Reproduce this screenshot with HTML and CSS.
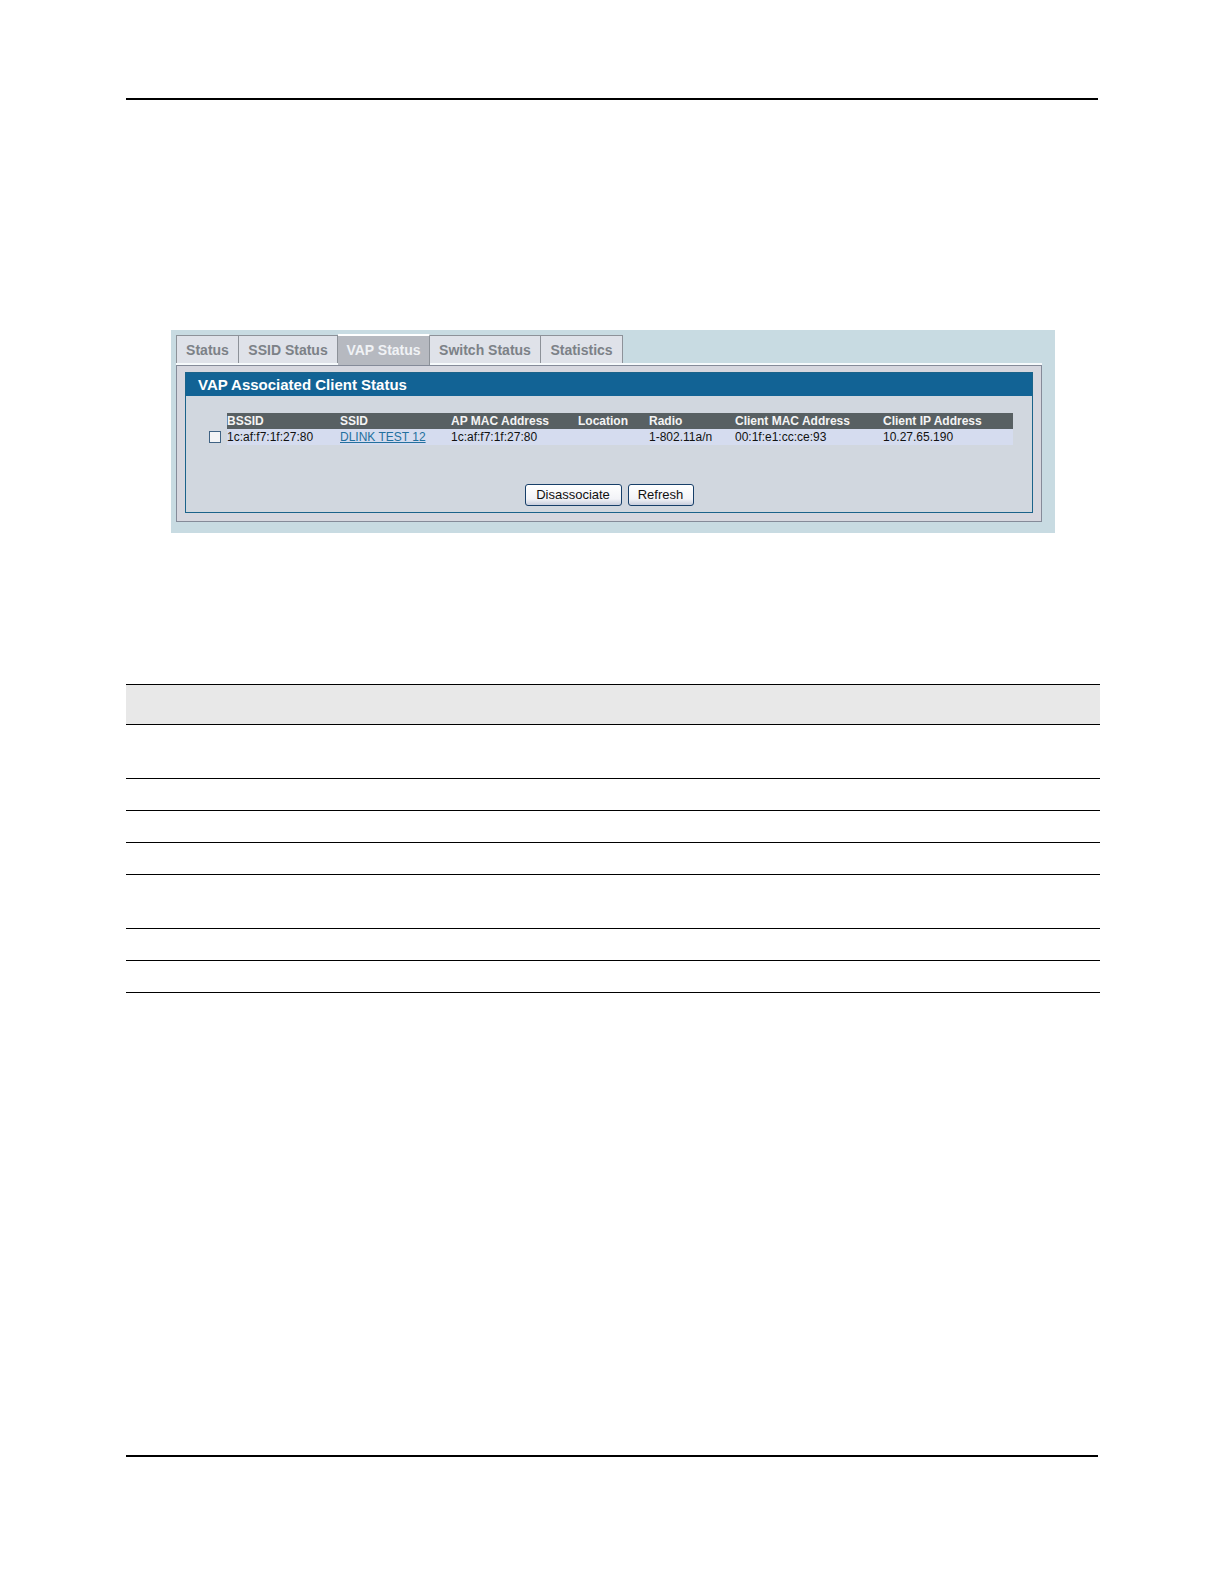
FILE: index.html
```html
<!DOCTYPE html>
<html lang="en">
<head>
<meta charset="utf-8">
<title>VAP Associated Client Status</title>
<link rel="stylesheet" href="styles.css">
</head>
<body>
<div class="page">
  <header class="page-rule"></header>
  <main>
    <section class="screen">
      <nav class="tabs">
        <a class="tab tab-status" href="#">Status</a>
        <a class="tab tab-ssid" href="#">SSID Status</a>
        <a class="tab tab-vap active" href="#">VAP Status</a>
        <a class="tab tab-switch" href="#">Switch Status</a>
        <a class="tab tab-statistics" href="#">Statistics</a>
      </nav>
      <div class="frame">
        <form class="panel">
          <h1 class="panel-title">VAP Associated Client Status</h1>
          <table class="clients">
            <colgroup>
              <col class="col-check"><col class="col-bssid"><col class="col-ssid"><col class="col-ap"><col class="col-location"><col class="col-radio"><col class="col-mac"><col>
            </colgroup>
            <thead>
              <tr><td></td><th scope="col">BSSID</th><th scope="col">SSID</th><th scope="col">AP MAC Address</th><th scope="col">Location</th><th scope="col">Radio</th><th scope="col">Client MAC Address</th><th scope="col">Client IP Address</th></tr>
            </thead>
            <tbody>
              <tr><td><input class="check" type="checkbox" aria-labelledby="bssid-1"></td><td id="bssid-1">1c:af:f7:1f:27:80</td><td><a class="ssid" href="#">DLINK TEST 12</a></td><td>1c:af:f7:1f:27:80</td><td></td><td>1-802.11a/n</td><td>00:1f:e1:cc:ce:93</td><td>10.27.65.190</td></tr>
            </tbody>
          </table>
          <div class="actions">
            <button class="btn btn-wide" type="button">Disassociate</button>
            <button class="btn" type="button">Refresh</button>
          </div>
        </form>
      </div>
    </section>
    <table class="fields">
      <thead><tr><th></th><th></th></tr></thead>
      <tbody>
        <tr class="tall"><td></td><td></td></tr>
        <tr><td></td><td></td></tr>
        <tr><td></td><td></td></tr>
        <tr><td></td><td></td></tr>
        <tr class="tall"><td></td><td></td></tr>
        <tr><td></td><td></td></tr>
        <tr><td></td><td></td></tr>
      </tbody>
    </table>
  </main>
  <footer class="page-rule page-end"></footer>
</div>
</body>
</html>
```
FILE: styles.css
```css
* { box-sizing: border-box; }
body {
  margin: 0;
  background: #fff;
  color: #111;
  font: 12px/16px "Liberation Sans", Arial, sans-serif;
}
.page {
  display: flex;
  flex-direction: column;
  min-height: 100vh;
  padding: 98px 126px 127px;
}
.page-rule { border-top: 2px solid #000; }
.page-end { margin-top: auto; }

.screen {
  margin: 230px 43px 151px 45px;
  padding: 4px 13px 11px 5px;
  background: #c8dbe2;
}
.tabs {
  display: flex;
  align-items: flex-end;
  border-bottom: 2px solid #f6fafc;
}
.tab {
  height: 28px;
  border: 1px solid #8d9299;
  border-left-width: 0;
  border-bottom: 0;
  background: #dfe2e9;
  color: #7c8187;
  font-size: 14px;
  font-weight: bold;
  line-height: 28px;
  text-align: center;
  text-decoration: none;
}
.tab-status { width: 63px; border-left-width: 1px; }
.tab-ssid { width: 99px; }
.tab-vap { width: 92px; }
.tab-switch { width: 111px; }
.tab-statistics { width: 82px; }
.tab.active {
  height: 31px;
  margin-bottom: -2px;
  border-top: 2px solid #fff;
  background: #b6b9c0;
  color: #f0f2f5;
}
.frame {
  padding: 6px 8px 8px;
  border: 1px solid #858b99;
  background: #d6d7df;
}
.panel {
  margin: 0;
  border: 1px solid #1b638a;
  background: #d1d7df;
}
.panel-title {
  margin: 0;
  padding-left: 12px;
  background: #126395;
  color: #fff;
  font-size: 15px;
  line-height: 23px;
}
.clients {
  width: calc(100% - 42px);
  margin: 17px 19px 0 23px;
  table-layout: fixed;
  border-collapse: collapse;
}
.clients th, .clients td { height: 16px; padding: 0; text-align: left; white-space: nowrap; }
.clients th { background: #586063; color: #f4f4f4; }
.clients tbody td { background: #d5dcef; }
.clients tbody td:first-child { background: none; }
.col-check { width: 18px; }
.col-bssid { width: 113px; }
.col-ssid { width: 111px; }
.col-ap { width: 127px; }
.col-location { width: 71px; }
.col-radio { width: 86px; }
.col-mac { width: 148px; }
.check {
  appearance: none;
  display: block;
  width: 12px;
  height: 12px;
  margin: 0;
  border: 1px solid #3f6283;
  background: #f3f4f6;
}
.check:checked { background: #126395; }
.ssid { color: #23709e; }
.actions {
  display: flex;
  justify-content: center;
  gap: 6px;
  padding: 39px 0 6px;
}
.btn {
  width: 66px;
  height: 22px;
  padding: 0;
  border: 1px solid #173f69;
  border-radius: 3px;
  background: linear-gradient(#fff, #f2f3f7 70%, #c9cedd);
  color: #111;
  font: 13px/20px "Liberation Sans", Arial, sans-serif;
}
.btn-wide { width: 97px; }

.fields {
  width: calc(100% + 2px);
  border-collapse: separate;
  border-spacing: 0;
  border-top: 1px solid #000;
}
.fields th, .fields td { height: 32px; padding: 0; border-bottom: 1px solid #000; }
.fields th { height: 40px; background: #e8e8e8; }
.fields .tall td { height: 54px; }
```
